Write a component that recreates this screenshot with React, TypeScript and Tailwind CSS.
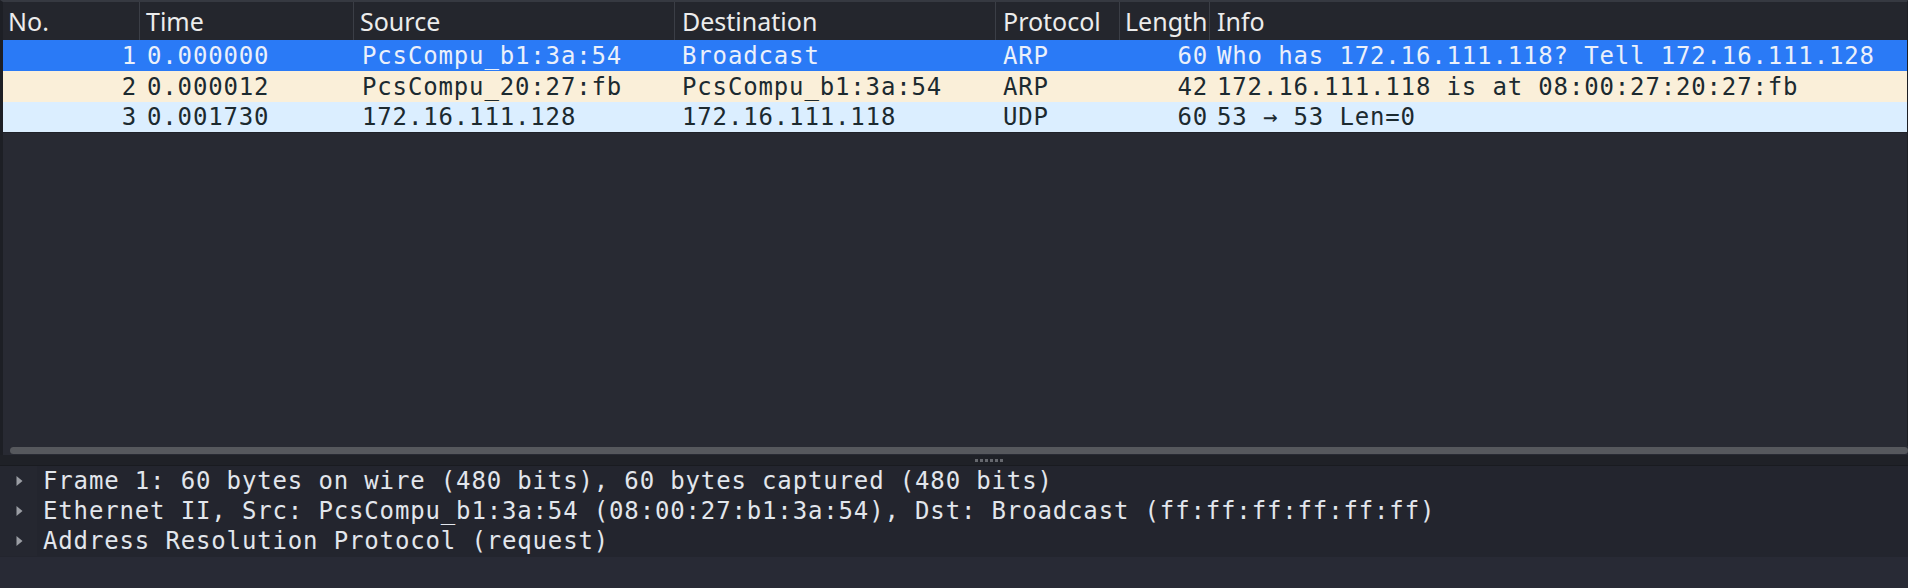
import React from "react";

const mono = { fontFamily: '"DejaVu Sans Mono", "Liberation Mono", monospace' };
const sans = { fontFamily: '"Noto Sans", "Open Sans", sans-serif' };

type Row = {
  no: string;
  time: string;
  src: string;
  dst: string;
  proto: string;
  len: string;
  info: string;
  bg: string;
  fg: string;
};

const rows: Row[] = [
  {
    no: "1",
    time: "0.000000",
    src: "PcsCompu_b1:3a:54",
    dst: "Broadcast",
    proto: "ARP",
    len: "60",
    info: "Who has 172.16.111.118? Tell 172.16.111.128",
    bg: "bg-[#2a7af6]",
    fg: "text-[#eaf0fb]",
  },
  {
    no: "2",
    time: "0.000012",
    src: "PcsCompu_20:27:fb",
    dst: "PcsCompu_b1:3a:54",
    proto: "ARP",
    len: "42",
    info: "172.16.111.118 is at 08:00:27:20:27:fb",
    bg: "bg-[#faefd9]",
    fg: "text-[#1c2a30]",
  },
  {
    no: "3",
    time: "0.001730",
    src: "172.16.111.128",
    dst: "172.16.111.118",
    proto: "UDP",
    len: "60",
    info: "53 → 53 Len=0",
    bg: "bg-[#dbeeff]",
    fg: "text-[#1c2a30]",
  },
];

const cols = "grid grid-cols-[136px_214px_321px_321px_124px_90px_1fr]";

function Header() {
  const h = [
    { t: "No.", c: "pl-[5px]" },
    { t: "Time", c: "pl-[6px] border-l border-[#3b3e46]" },
    { t: "Source", c: "pl-[6px] border-l border-[#3b3e46]" },
    { t: "Destination", c: "pl-[7px] border-l border-[#3b3e46]" },
    { t: "Protocol", c: "pl-[7px] border-l border-[#3b3e46]" },
    { t: "Length", c: "pl-[5px] border-l border-[#3b3e46]" },
    { t: "Info", c: "pl-[7px] border-l border-[#3b3e46]" },
  ];
  return (
    <div
      className={`${cols} h-[38px] bg-[#24262d] text-[#ececec] text-[25px] leading-[34px]`}
      style={sans}
    >
      {h.map((x, i) => (
        <div key={i} className={`flex items-center whitespace-nowrap overflow-hidden ${x.c}`}>
          {x.t}
        </div>
      ))}
    </div>
  );
}

function PacketRow({ r, h }: { r: Row; h: string }) {
  return (
    <div
      className={`${cols} ${h} ${r.bg} ${r.fg} text-[24px] leading-[28px] tracking-[0.85px] items-center whitespace-nowrap`}
      style={mono}
    >
      <div className="text-right pr-[2px]">{r.no}</div>
      <div className="pl-[8px]">{r.time}</div>
      <div className="pl-[9px]">{r.src}</div>
      <div className="pl-[8px]">{r.dst}</div>
      <div className="pl-[8px]">{r.proto}</div>
      <div className="text-right pr-[1px]">{r.len}</div>
      <div className="pl-[8px]">{r.info}</div>
    </div>
  );
}

function Triangle() {
  return (
    <svg width="10" height="14" viewBox="0 0 10 14" className="shrink-0">
      <path d="M1.5 2 L7.5 7 L1.5 12 Z" fill="#9a9da3" />
    </svg>
  );
}

export default function App() {
  const details = [
    "Frame 1: 60 bytes on wire (480 bits), 60 bytes captured (480 bits)",
    "Ethernet II, Src: PcsCompu_b1:3a:54 (08:00:27:b1:3a:54), Dst: Broadcast (ff:ff:ff:ff:ff:ff)",
    "Address Resolution Protocol (request)",
  ];
  return (
    <div className="w-[1908px] h-[588px] bg-[#282a35] flex flex-col overflow-hidden">
      {/* packet list */}
      <div className="h-[446px] flex flex-col bg-[#282a33] border-t-2 border-t-[#363941] border-l-[3px] border-l-[#1d1f25] border-r border-r-[#1d1f25]">
        <Header />
        <PacketRow r={rows[0]} h="h-[31px]" />
        <PacketRow r={rows[1]} h="h-[31px]" />
        <PacketRow r={rows[2]} h="h-[30px]" />
        <div className="h-[1px] bg-[#1f2128]" />
        <div className="flex-1 bg-[#282a33]" />
      </div>
      {/* horizontal scrollbar */}
      <div className="h-[9px] bg-[#282a33] flex items-center pl-[7px] border-l-[3px] border-l-[#1d1f25]">
        <div className="h-[7px] flex-1 rounded-full bg-[#56585d]" />
      </div>
      {/* splitter */}
      <div className="h-[11px] bg-[#1f2127] flex items-center justify-center border-b border-b-[#191b20]">
        <div className="flex gap-[2px] ml-[70px]">
          {[0, 1, 2, 3, 4, 5].map((i) => (
            <div key={i} className="w-[3px] h-[3px] bg-[#65676d]" />
          ))}
        </div>
      </div>
      {/* details */}
      <div className="h-[91px] bg-[#23252e] flex flex-col">
        {details.map((d, i) => (
          <div key={i} className="h-[30px] flex items-center">
            <div className="w-[37px] h-full flex items-center pl-[15px] bg-[#252730]">
              <Triangle />
            </div>
            <div
              className="flex-1 h-full flex items-center pl-[6px] text-[24px] leading-[28px] tracking-[0.85px] text-[#e2e6ec] whitespace-nowrap"
              style={mono}
            >
              {d}
            </div>
          </div>
        ))}
      </div>
      <div className="flex-1 bg-[#282a35]" />
    </div>
  );
}
